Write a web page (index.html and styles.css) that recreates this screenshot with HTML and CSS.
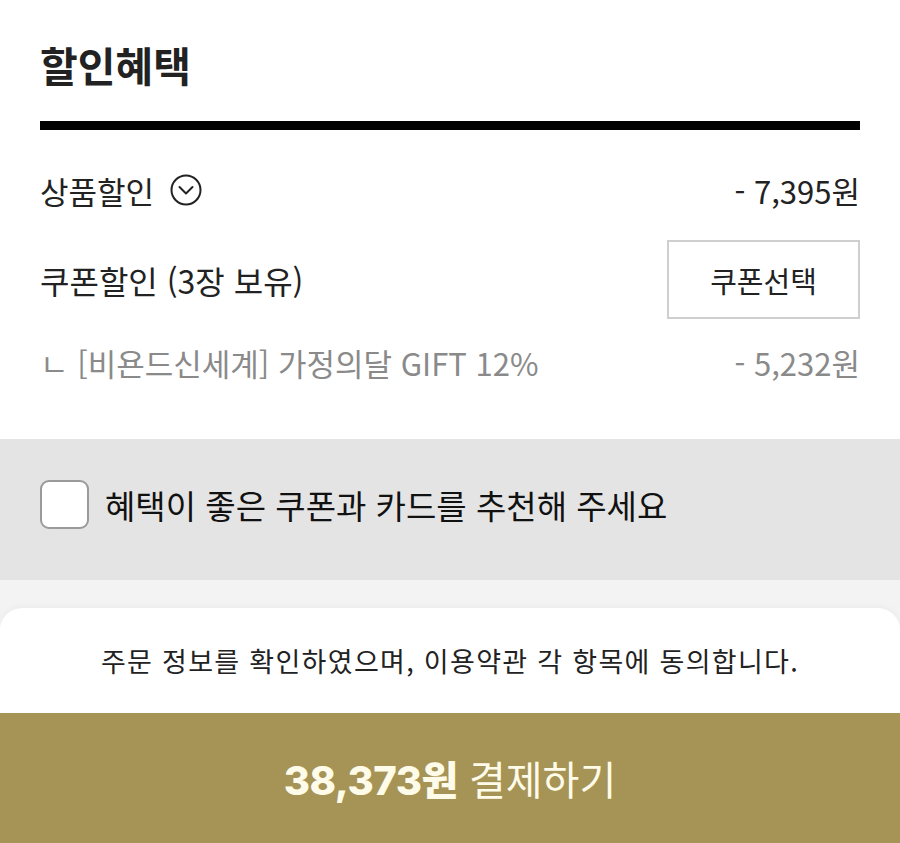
FILE: index.html
```html
<!DOCTYPE html>
<html lang="ko">
<head>
    <meta charset="UTF-8">
    <meta name="viewport" content="width=device-width, initial-scale=1.0">
    <title>할인혜택</title>
    <link rel="stylesheet" href="styles.css">
</head>
<body>

<section class="benefit">
    <h2 class="benefit-title">할인혜택</h2>

    <div class="row row-product">
        <span class="row-label">
            상품할인
            <!-- 펼치기 아이콘 -->
            <svg class="toggle-icon" width="32" height="32" viewBox="0 0 32 32">
                <circle cx="16" cy="16" r="14.5" fill="none" stroke="#222" stroke-width="2"/>
                <path d="M9.5 13 L16 19.5 L22.5 13" fill="none" stroke="#222" stroke-width="2" stroke-linecap="round" stroke-linejoin="round"/>
            </svg>
        </span>
        <span class="row-price">- 7,395원</span>
    </div>

    <div class="row row-coupon">
        <span class="row-label">쿠폰할인 (3장 보유)</span>
        <button class="coupon-btn">쿠폰선택</button>
    </div>

    <div class="row row-sub">
        <span class="row-label">ㄴ [비욘드신세계] 가정의달 GIFT 12%</span>
        <span class="row-price">- 5,232원</span>
    </div>
</section>

<section class="recommend">
    <label class="check">
        <input type="checkbox">
        <span class="check-box"></span>
        <span class="check-text">혜택이 좋은 쿠폰과 카드를 추천해 주세요</span>
    </label>
</section>

<div class="pay-area">
    <div class="pay-card">
        <p class="agree">주문 정보를 확인하였으며, 이용약관 각 항목에 동의합니다.</p>
        <button class="pay-btn"><b>38,373원</b> 결제하기</button>
    </div>
</div>

</body>
</html>
```

FILE: styles.css
```css
body {
    font-family: "Noto Sans CJK KR", "Noto Sans", sans-serif;
    margin: 0;
    padding: 0;
    background-color: #f3f3f3;
    color: #222;
    height: 843px;
    overflow: hidden;
}
.benefit {
    background-color: #fff;
    padding: 37px 40px 52px;
}
.benefit-title {
    margin: 0;
    font-size: 41px;
    font-weight: 700;
    line-height: 54px;
    border-bottom: 9px solid #000;
    padding-bottom: 30px;
}
.row {
    display: flex;
    justify-content: space-between;
    align-items: center;
    font-size: 31px;
}
.row-label {
    display: flex;
    align-items: center;
    gap: 16px;
}
.toggle-icon {
    display: block;
}
.row-product {
    height: 60px;
    margin-top: 30px;
}
.row-coupon {
    height: 79px;
    margin-top: 20px;
    font-size: 32px;
}
.coupon-btn {
    width: 193px;
    height: 79px;
    background-color: #fff;
    border: 2px solid #cfcfcf;
    font-family: inherit;
    font-size: 29px;
    color: #222;
    cursor: pointer;
}
.row-sub {
    color: #8a8a8a;
    height: 50px;
    margin-top: 18px;
}
.recommend {
    background-color: #e4e4e4;
    height: 131px;
    padding: 0 40px 10px;
    display: flex;
    align-items: center;
}
.check {
    display: flex;
    align-items: center;
    gap: 16px;
    cursor: pointer;
}
.check input {
    display: none;
}
.check-box {
    width: 45px;
    height: 45px;
    background-color: #fff;
    border: 2px solid #9a9a9a;
    border-radius: 9px;
}
.check-text {
    font-size: 33px;
    color: #111;
}
.pay-area {
    padding-top: 28px;
}
.pay-card {
    background-color: #fff;
    border-radius: 22px 22px 0 0;
    overflow: hidden;
    box-shadow: 0 -2px 6px rgba(0, 0, 0, 0.03);
}
.agree {
    margin: 0;
    height: 105px;
    line-height: 105px;
    text-align: center;
    font-size: 27px;
    letter-spacing: 1.3px;
    color: #222;
}
.pay-btn {
    display: block;
    width: 100%;
    height: 130px;
    border: none;
    background-color: #a69456;
    color: #fffbe9;
    font-family: inherit;
    font-size: 40px;
    padding: 0;
    cursor: pointer;
}
.pay-btn b {
    font-family: "Inter", "Noto Sans CJK KR", sans-serif;
    font-weight: 800;
    letter-spacing: -0.5px;
}
```
